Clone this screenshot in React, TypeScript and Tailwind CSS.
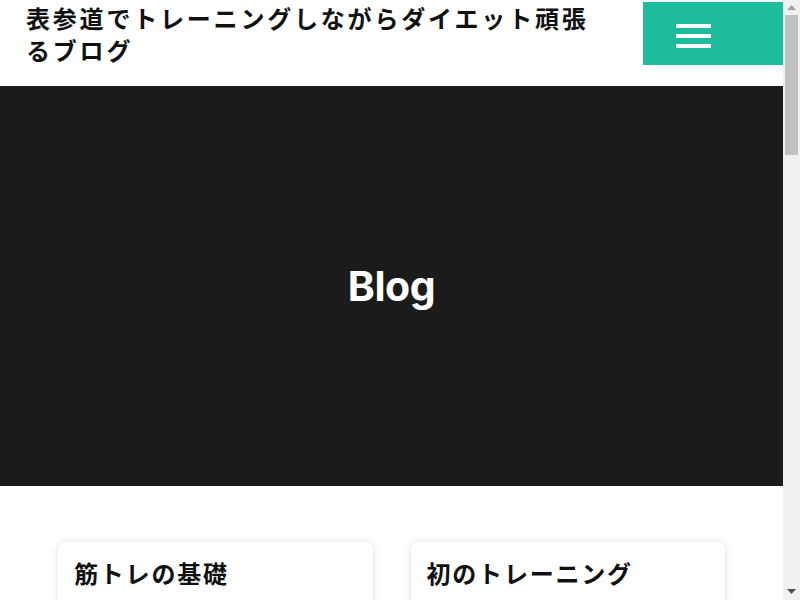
import React from "react";

export default function App() {
  const cards = ["筋トレの基礎", "初のトレーニング", "食事管理のコツ", "表参道のジム"];
  return (
    <div className="flex h-[600px] w-full overflow-hidden bg-white" style={{ fontFamily: '"Noto Sans CJK JP", "Noto Sans", sans-serif' }}>
      <div className="h-[600px] flex-1 overflow-hidden">
        <header className="flex h-[86px] items-start justify-between">
          <h1 className="ml-[26px] mt-[2px] w-[580px] text-[24px] font-bold leading-[32px] tracking-[2.8px] text-[#111]">
            表参道でトレーニングしながらダイエット頑張るブログ
          </h1>
          <button className="mt-[2px] flex h-[63px] w-[140px] flex-col items-start gap-[6px] bg-[#1dbc9c] pl-[33px] pt-[22px]">
            <span className="block h-[4px] w-[35px] bg-white" />
            <span className="block h-[4px] w-[35px] bg-white" />
            <span className="block h-[4px] w-[35px] bg-white" />
          </button>
        </header>
        <section className="flex h-[400px] items-center justify-center bg-[#1b1b1b]">
          <h2
            className="pt-[2px] text-[41px] font-bold tracking-[-0.5px] text-white"
            style={{ fontFamily: '"Inter", "Lato", sans-serif' }}
          >
            Blog
          </h2>
        </section>
        <main className="mx-auto grid max-w-[667px] grid-cols-2 gap-x-[38px] gap-y-[40px] pt-[56px]">
          {cards.map((c) => (
            <div
              key={c}
              className="h-[320px] rounded-[8px] bg-white px-[16px] pt-[14px] shadow-[0_0_8px_rgba(0,0,0,0.12)]"
            >
              <h3 className="text-[24px] font-bold leading-[34px] tracking-[1.8px] text-[#111]">{c}</h3>
            </div>
          ))}
        </main>
      </div>
      <div className="flex h-[600px] w-[17px] shrink-0 flex-col items-center bg-[#f1f1f1]">
        <div className="flex h-[15px] items-center justify-center">
          <svg width="9" height="5" viewBox="0 0 9 5"><path d="M4.5 0L9 5H0z" fill="#a3a3a3" /></svg>
        </div>
        <div className="h-[140px] w-[13px] bg-[#c1c1c1]" />
        <div className="flex-1" />
        <div className="flex h-[17px] items-center justify-center">
          <svg width="9" height="5" viewBox="0 0 9 5"><path d="M0 0H9L4.5 5z" fill="#505050" /></svg>
        </div>
      </div>
    </div>
  );
}
